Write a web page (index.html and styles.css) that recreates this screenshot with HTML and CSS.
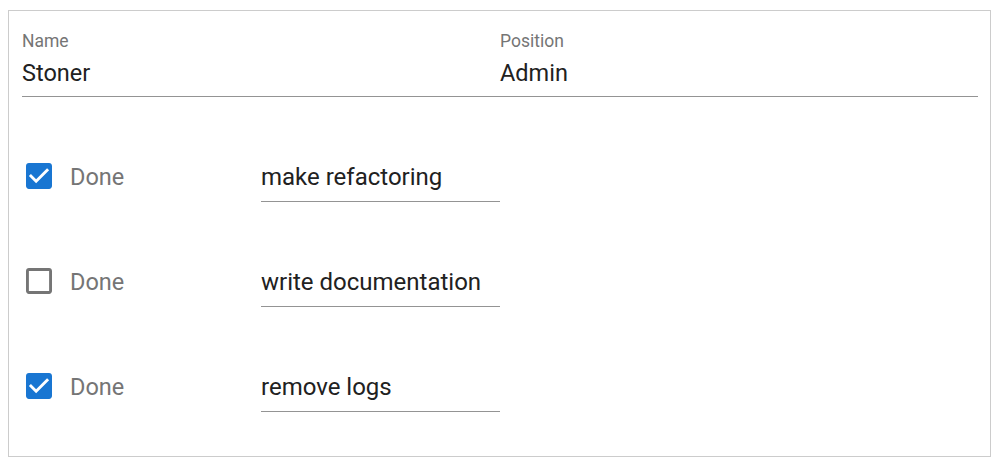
FILE: index.html
```html
<!DOCTYPE html>
<html lang="en">
<head>
    <meta charset="UTF-8">
    <meta name="viewport" content="width=device-width, initial-scale=1.0">
    <title>Employee tasks</title>
    <link rel="stylesheet" href="styles.css">
</head>
<body>
    <div class="card">
        <div class="header">
            <div class="field">
                <label class="field-label">Name</label>
                <div class="field-value">Stoner</div>
            </div>
            <div class="field">
                <label class="field-label">Position</label>
                <div class="field-value">Admin</div>
            </div>
        </div>

        <div class="tasks">
            <div class="task">
                <div class="check">
                    <svg class="box checked" viewBox="3 3 18 18"><path d="M19 3H5c-1.11 0-2 .9-2 2v14c0 1.1.89 2 2 2h14c1.11 0 2-.9 2-2V5c0-1.1-.89-2-2-2zm-9 14l-5-5 1.41-1.41L10 14.17l7.59-7.59L19 8l-9 9z"/></svg>
                    <span class="check-label">Done</span>
                </div>
                <div class="task-input">make refactoring</div>
            </div>
            <div class="task">
                <div class="check">
                    <svg class="box" viewBox="3 3 18 18"><path d="M19 5v14H5V5h14m0-2H5c-1.1 0-2 .9-2 2v14c0 1.1.9 2 2 2h14c1.1 0 2-.9 2-2V5c0-1.1-.9-2-2-2z"/></svg>
                    <span class="check-label">Done</span>
                </div>
                <div class="task-input">write documentation</div>
            </div>
            <div class="task">
                <div class="check">
                    <svg class="box checked" viewBox="3 3 18 18"><path d="M19 3H5c-1.11 0-2 .9-2 2v14c0 1.1.89 2 2 2h14c1.11 0 2-.9 2-2V5c0-1.1-.89-2-2-2zm-9 14l-5-5 1.41-1.41L10 14.17l7.59-7.59L19 8l-9 9z"/></svg>
                    <span class="check-label">Done</span>
                </div>
                <div class="task-input">remove logs</div>
            </div>
        </div>
    </div>
</body>
</html>
```

FILE: styles.css
```css
body {
    font-family: Roboto, "Noto Sans", Arial, sans-serif;
    margin: 10px 8px 0;
    padding: 0;
    color: #212121;
    background: #fff;
}

.card {
    border: 1px solid #cccccc;
    padding: 20px 12px 44px 13px;
}

.header {
    display: grid;
    grid-template-columns: 1fr 1fr;
}

.field {
    border-bottom: 1px solid #949494;
    padding-bottom: 8px;
}

.field-label {
    display: block;
    font-size: 17.5px;
    line-height: 20px;
    color: #757575;
}

.field-value {
    font-size: 23.5px;
    line-height: 30px;
    margin-top: 7px;
}

.tasks {
    display: flex;
    flex-direction: column;
    gap: 65px;
    padding-top: 65px;
}

.task {
    display: grid;
    grid-template-columns: 239px 239px;
}

.check {
    display: flex;
    align-items: flex-start;
    padding-left: 4px;
}

.box {
    width: 26px;
    height: 26px;
    margin-top: 1px;
    fill: #757575;
    flex-shrink: 0;
}

.box.checked {
    fill: #1976d2;
}

.check-label {
    font-size: 23.5px;
    line-height: 30px;
    color: #757575;
    margin-left: 18px;
}

.task-input {
    font-size: 24px;
    line-height: 30px;
    padding-bottom: 9px;
    border-bottom: 1px solid #949494;
}
```
